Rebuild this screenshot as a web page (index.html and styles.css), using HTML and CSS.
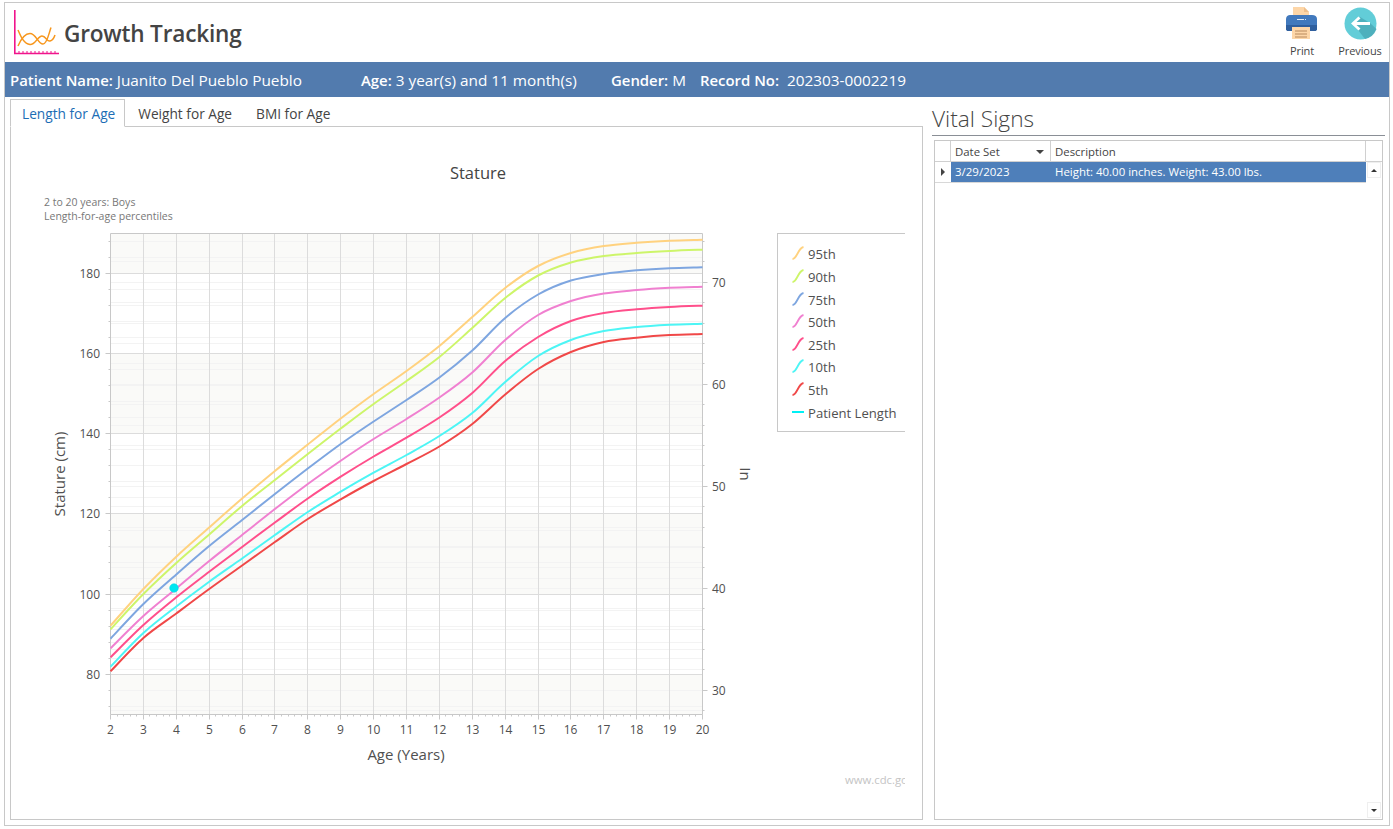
FILE: index.html
```html
<!DOCTYPE html>
<html lang="en">
<head>
<meta charset="utf-8">
<title>Growth Tracking</title>
<link rel="stylesheet" href="styles.css">
</head>
<body>
<div class="window">
  <header class="top">
    <div class="brand">
      <svg class="logo" width="48" height="48" viewBox="13 9 48 48" aria-hidden="true">
        <path class="logo-axis" d="M14.8 10V53.5H59"/>
        <path class="logo-ticks" d="M19 51V53M23 51V53M27 51V53M31 51V53M35 51V53M39 51V53M43 51V53M47 51V53M51 51V53M55 51V53"/>
        <path class="logo-curve" d="M18 30C21 37 24 44 30 44.500C35 45 38 36 42 36C46 36 47 42 50 41C52 40.500 54 38 55 35"/>
        <path class="logo-curve" d="M18 46C21 39 25 33.500 30 33.500C36 33.500 38 44 43 44C47 44 49 33 51 27.500"/>
      </svg>
      <h1 class="title">Growth Tracking</h1>
    </div>
    <div class="actions">
      <div class="action action-print">
        <svg width="34" height="34" viewBox="0 0 34 34" aria-hidden="true">
          <path d="M8 0H19L24 5V12H8Z" fill="#fdd6a8"/>
          <path d="M19 0L24 5H19Z" fill="#eebf8c"/>
          <path d="M1 12C1 9.500 3 8 5 8H27C30 8 32 9.500 32 12V23H1Z" fill="#4179bd"/>
          <path d="M1 18H32V22C32 23.500 31 24 30 24H3C2 24 1 23.500 1 22Z" fill="#2f5f9e"/>
          <path d="M12 12H19V13H12ZM20 12H21V13H20Z" fill="#dfe9f5"/>
          <path d="M7 20H25V32H7Z" fill="#fdd6a8"/>
          <path d="M10 24H22M10 27H22M10 30H22" stroke="#b88a5f" stroke-width="1" fill="none"/>
        </svg>
        <span class="action-label">Print</span>
      </div>
      <div class="action action-prev">
        <svg width="33" height="33" viewBox="0 0 33 33" aria-hidden="true">
          <circle cx="16.500" cy="16.500" r="16" fill="#62cdd8"/>
          <path d="M9 16.500L16 10L26 16L32.500 22A16 16 0 0 1 21 32Z" fill="#4eb0bd"/>
          <path d="M7 16.500L14.500 9.500L16.500 11.500L12.500 15H26V18H12.500L16.500 21.500L14.500 23.500Z" fill="#fff"/>
        </svg>
        <span class="action-label">Previous</span>
      </div>
    </div>
  </header>

  <div class="patient">
    <span class="field field-name"><b>Patient Name:</b> Juanito Del Pueblo Pueblo</span>
    <span class="field field-age"><b>Age:</b> 3 year(s) and 11 month(s)</span>
    <span class="field field-gender"><b>Gender:</b> M</span>
    <span class="field"><b>Record No:</b>&nbsp; 202303-0002219</span>
  </div>

  <main class="main">
    <section class="left">
      <nav class="tabs">
        <span class="tab tab-active">Length for Age</span>
        <span class="tab">Weight for Age</span>
        <span class="tab">BMI for Age</span>
      </nav>
      <div class="panel">
        <svg id="chart" class="chart" width="894" height="692" viewBox="11 127 894 692">
          <g id="plot"></g>
          <text class="c-title" x="478" y="178.500" text-anchor="middle">Stature</text>
          <text class="c-sub" x="44" y="205.500">2 to 20 years: Boys</text>
          <text class="c-sub" x="44" y="219.500">Length-for-age percentiles</text>
          <text class="c-axis" transform="translate(65 474) rotate(-90)" text-anchor="middle">Stature (cm)</text>
          <text class="c-axis" transform="translate(740 474) rotate(90)" text-anchor="middle">In</text>
          <text class="c-axis" x="406" y="760" text-anchor="middle">Age (Years)</text>
          <text class="c-site" x="845" y="783.500">www.cdc.gov</text>
          <g id="legend"></g>
        </svg>
      </div>
    </section>
    <aside class="right">
      <h2 class="vital">Vital Signs</h2>
      <div class="grid">
        <div class="grid-head">
          <div class="cell cell-ind"></div>
          <div class="cell cell-date">Date Set<i class="sort"></i></div>
          <div class="cell cell-desc">Description</div>
          <div class="cell cell-bar"></div>
        </div>
        <div class="grid-body">
          <div class="rows">
            <div class="grid-row">
              <div class="cell-ind row-ind"><i class="pointer"></i></div>
              <div class="sel sel-date">3/29/2023</div>
              <div class="sel sel-desc">Height: 40.00 inches. Weight: 43.00 lbs.</div>
            </div>
          </div>
          <div class="scroll">
            <div class="scroll-btn"><i class="arrow-up"></i></div>
            <div class="scroll-btn"><i class="arrow-down"></i></div>
          </div>
        </div>
      </div>
    </aside>
  </main>
</div>
<script src="chart.js"></script>
</body>
</html>
```
FILE: styles.css
```css
* { box-sizing: border-box; }
html, body { height: 100%; }
body {
  margin: 0;
  padding: 2px 3px 3px 4px;
  background: #fff;
  font-family: "Open Sans", "Noto Sans", sans-serif;
  color: #444;
}
.window {
  height: 100%;
  border: 1px solid #c8c8c8;
  display: flex;
  flex-direction: column;
  background: #fff;
}
.top {
  height: 59px;
  display: flex;
  justify-content: space-between;
  flex: none;
}
.brand { display: flex; align-items: flex-start; }
.logo { margin: 6px 0 0 8px; flex: none; }
.logo-axis { fill: none; stroke: #f0148c; stroke-width: 1.600; }
.logo-ticks { fill: none; stroke: #f0148c; stroke-width: 1; }
.logo-curve { fill: none; stroke: #f7971e; stroke-width: 1.500; }
.title {
  margin: 15px 0 0 3px;
  font-size: 22.600px;
  line-height: 32px;
  font-weight: 600;
  color: #444;
  letter-spacing: -0.2px;
}
.actions { display: flex; padding: 4px 6px 0 0; }
.action { display: flex; flex-direction: column; align-items: center; }
.action-print { width: 58px; margin-right: 6px; }
.action-prev { width: 46px; }
.action-label { font-size: 11px; line-height: 14px; margin-top: 3px; color: #444; white-space: nowrap; letter-spacing: -0.1px; }
.action-print .action-label { margin-top: 3px; }
.action-prev .action-label { margin-top: 4px; }

.patient {
  height: 35px;
  flex: none;
  background: #527bae;
  color: #fff;
  display: flex;
  align-items: center;
  padding: 1px 0 0 5px;
  font-size: 15.350px;
  white-space: nowrap;
}
.patient b { font-weight: 600; font-size: 14.900px; }
.field-name { width: 351px; }
.field-age { width: 250px; }
.field-gender { width: 89px; }

.main {
  flex: 1;
  min-height: 0;
  display: flex;
  padding: 2px 4px 5px 5px;
}
.left { width: 913px; flex: none; display: flex; flex-direction: column; }
.tabs { display: flex; height: 28px; flex: none; margin-bottom: -1px; position: relative; z-index: 1; }
.tab {
  height: 28px;
  font-size: 13.700px;
  line-height: 29px;
  padding: 0 12px;
  color: #444;
  white-space: nowrap;
}
.tab-active {
  color: #1c6db5;
  border: 1px solid #c8c8c8;
  border-bottom: 1px solid #fff;
  line-height: 27px;
  padding: 0 9px 0 11px;
  margin-right: 1px;
  background: #fff;
}
.panel { flex: 1; min-height: 0; border: 1px solid #c8c8c8; background: #fff; }
.chart { display: block; }
.c-title { font-size: 16.500px; fill: #444; }
.c-sub { font-size: 10.500px; fill: #777; }
.c-axis { font-size: 15px; fill: #505050; }
.c-site { font-size: 11.300px; fill: #c4c4c4; }
.c-tick { font-size: 12px; fill: #505050; }
.c-legend { font-size: 13.100px; fill: #505050; }
.c-legend-box { fill: #fff; stroke: #c8c8c8; stroke-width: 1; }
.c-shade { fill: #fafaf8; }
.c-major { stroke: #dcdcdc; stroke-width: 1; }
.c-minor { stroke: #f3f3f3; stroke-width: 1; }
.c-frame { stroke: #c8c8c8; stroke-width: 1; }
.c-curve { fill: none; stroke-width: 2; stroke-linejoin: round; }
.c-dot { fill: #00e6f0; stroke: #00d4e4; stroke-width: 0.500; }

.right { flex: 1; min-width: 0; margin-left: 9px; display: flex; flex-direction: column; }
.vital {
  margin: 0;
  height: 37px;
  flex: none;
  border-bottom: 1px solid #8a8f96;
  font-size: 22.700px;
  line-height: 40px;
  font-weight: 300;
  color: #444;
}
.grid {
  flex: 1;
  min-height: 0;
  margin: 4px 2px 0 2px;
  border: 1px solid #c8c8c8;
  display: flex;
  flex-direction: column;
}
.grid-head {
  display: flex;
  height: 21px;
  flex: none;
  border-bottom: 1px solid #d0d0d0;
  font-size: 11.400px;
  color: #444;
}
.cell { line-height: 21px; border-right: 1px solid #d0d0d0; position: relative; }
.cell-ind { width: 16px; flex: none; }
.cell-date { width: 100px; padding-left: 4px; }
.cell-desc { width: 315px; padding-left: 4px; }
.cell-bar { flex: 1; border-right: 0; }
.sort {
  position: absolute;
  right: 6px;
  top: 9px;
  border: 4px solid transparent;
  border-top-color: #444;
  border-bottom: 0;
}
.grid-body { flex: 1; min-height: 0; display: flex; }
.rows { width: 431px; flex: none; }
.grid-row { display: flex; height: 21px; border-bottom: 1px solid #d8d8d8; font-size: 11.450px; line-height: 20px; }
.row-ind { position: relative; }
.pointer {
  position: absolute;
  left: 6px;
  top: 6px;
  border: 4px solid transparent;
  border-left-color: #444;
  border-right: 0;
}
.sel { background: #4e7fba; color: #fff; padding-left: 4px; font-weight: 500; }
.sel-date { width: 100px; font-weight: 400; font-size: 11.500px; }
.sel-desc { width: 315px; }
.scroll {
  flex: 1;
  padding: 0 1px 1px 1px;
  display: flex;
  flex-direction: column;
  justify-content: space-between;
}
.scroll-btn {
  height: 16px;
  border: 1px solid #efefef;
  display: flex;
  align-items: center;
  justify-content: center;
}
.arrow-up { border: 3.500px solid transparent; border-bottom-color: #333; border-top: 0; }
.arrow-down { border: 3.500px solid transparent; border-top-color: #333; border-bottom: 0; }
```
FILE: chart.js
```js
(function () {
  var NS = 'http://www.w3.org/2000/svg';
  var plot = document.getElementById('plot');
  var legend = document.getElementById('legend');
  var L = 110.5, R = 702.5, T = 233.5, B = 714.5;
  var xOf = function (age) { return L + (age - 2) * (R - L) / 18; };
  var yCm = function (v) { return 273.5 + (180 - v) * 4.0083; };
  var yIn = function (v) { return 282.3 + (70 - v) * 10.2; };
  var snap = function (v) { return Math.round(v - 0.5) + 0.5; };

  function el(parent, name, attrs, text) {
    var n = document.createElementNS(NS, name);
    for (var k in attrs) n.setAttribute(k, attrs[k]);
    if (text !== undefined) n.textContent = text;
    parent.appendChild(n);
    return n;
  }
  function line(cls, x1, y1, x2, y2) {
    el(plot, 'line', { 'class': cls, x1: x1, y1: y1, x2: x2, y2: y2 });
  }

  // alternating strips
  [[190, 180], [160, 140], [120, 100], [80, 70]].forEach(function (s) {
    var y1 = Math.max(T, snap(yCm(s[0]))), y2 = Math.min(B, snap(yCm(s[1])));
    el(plot, 'rect', { 'class': 'c-shade', x: L, y: y1, width: R - L, height: y2 - y1 });
  });

  // minor grid lines, both scales
  var v;
  for (v = 72; v < 190; v += 4) {
    if (v % 20 === 0) continue;
    line('c-minor', L, snap(yCm(v)), R, snap(yCm(v)));
    line('c-frame', L - 2, snap(yCm(v)), L, snap(yCm(v)));
  }
  for (v = 28; v <= 74; v += 2) {
    line('c-minor', L, snap(yIn(v)), R, snap(yIn(v)));
    line('c-frame', R, snap(yIn(v)), R + 2, snap(yIn(v)));
  }
  // major grid lines and labels
  for (v = 80; v <= 180; v += 20) {
    var yc = snap(yCm(v));
    line('c-major', L, yc, R, yc);
    line('c-frame', L - 5, yc, L, yc);
    el(plot, 'text', { 'class': 'c-tick', x: 100, y: yc + 4.5, 'text-anchor': 'end' }, v);
  }
  for (v = 30; v <= 70; v += 10) {
    var yi = snap(yIn(v));
    line('c-frame', R, yi, R + 5, yi);
    el(plot, 'text', { 'class': 'c-tick', x: 712, y: yi + 4.5 }, v);
  }
  for (var a = 2; a <= 20; a++) {
    var x = snap(xOf(a));
    if (a > 2 && a < 20) line('c-major', x, T, x, B);
    line('c-frame', x, B, x, B + 5);
    el(plot, 'text', { 'class': 'c-tick', x: x, y: 734, 'text-anchor': 'middle' }, a);
    if (a < 20) for (var m = 1; m < 5; m++) {
      var mx = snap(xOf(a + m / 5));
      line('c-frame', mx, B, mx, B + 2);
    }
  }
  line('c-frame', L, T, R, T);
  line('c-frame', L, B, R, B);
  line('c-frame', L, T, L, B);
  line('c-frame', R, T, R, B);

  // pixel positions of each percentile, age 2 to 20
  var series = [
    { name: '95th', color: '#ffd27f', ys: [625.7,589,556.7,527.5,498.5,471,444.5,418.5,394,371,346,317,288,266,253,246,242.7,240.7,239.7] },
    { name: '90th', color: '#cdf56a', ys: [629.3,594,563,534.5,506,480,454,428.5,404,381,357,328,298,275.5,262.5,256,253,251,249.7] },
    { name: '75th', color: '#7ea6e0', ys: [638.7,604,574.5,546,520,494,468.5,444,421.5,400,377.5,350.5,318,294.5,280.5,274,270.3,268.3,267.3] },
    { name: '50th', color: '#f080d0', ys: [648.3,616,588.5,561,535,509,484,460.7,439,419,397.5,372.5,340,315,301,293.5,290,287.7,286.7] },
    { name: '25th', color: '#ff4f8b', ys: [657.3,625,597.3,571.7,547,522.5,498.5,476.7,456.5,437.7,417.5,393,361,337,321,313,309.3,307,305.7] },
    { name: '10th', color: '#4df5f5', ys: [666.7,633,606.5,581.7,558.5,535,512,491.7,472.7,455,436,413,382,356,340,331,327,324.7,323.7] },
    { name: '5th',  color: '#f04848', ys: [671.3,638,613.5,589,565.5,542,519,499.3,481,464,446.5,424,394.5,369,352,342,337.7,335,334] }
  ];
  series.forEach(function (s) {
    var pts = s.ys.map(function (y, i) { return [xOf(i + 2), y]; });
    var d = 'M' + pts[0][0] + ' ' + pts[0][1];
    for (var i = 0; i < pts.length - 1; i++) {
      var p0 = pts[Math.max(i - 1, 0)], p1 = pts[i], p2 = pts[i + 1], p3 = pts[Math.min(i + 2, pts.length - 1)];
      d += 'C' + (p1[0] + (p2[0] - p0[0]) / 6).toFixed(1) + ' ' + (p1[1] + (p2[1] - p0[1]) / 6).toFixed(1) +
           ' ' + (p2[0] - (p3[0] - p1[0]) / 6).toFixed(1) + ' ' + (p2[1] - (p3[1] - p1[1]) / 6).toFixed(1) +
           ' ' + p2[0].toFixed(1) + ' ' + p2[1];
    }
    el(plot, 'path', { 'class': 'c-curve', d: d, stroke: s.color });
  });

  // patient measurement
  el(plot, 'circle', { 'class': 'c-dot', cx: 174, cy: 588, r: 4.3 });

  // legend: right side runs past the clip edge of the chart
  el(legend, 'rect', { 'class': 'c-legend-box', x: 777.5, y: 233.5, width: 140, height: 198 });
  var rowY = [254, 277, 300, 322, 345, 367, 390];
  series.forEach(function (s, i) {
    var y = rowY[i];
    el(legend, 'path', { 'class': 'c-curve', stroke: s.color,
      d: 'M792.5 ' + (y + 5) + 'C797 ' + (y + 5) + ' 798 ' + (y - 6) + ' 803.5 ' + (y - 7) });
    el(legend, 'text', { 'class': 'c-legend', x: 808, y: y + 4.5 }, s.name);
  });
  el(legend, 'path', { 'class': 'c-curve', stroke: '#00f0f5', d: 'M792 412H804' });
  el(legend, 'text', { 'class': 'c-legend', x: 808, y: 417.5 }, 'Patient Length');
})();
```
